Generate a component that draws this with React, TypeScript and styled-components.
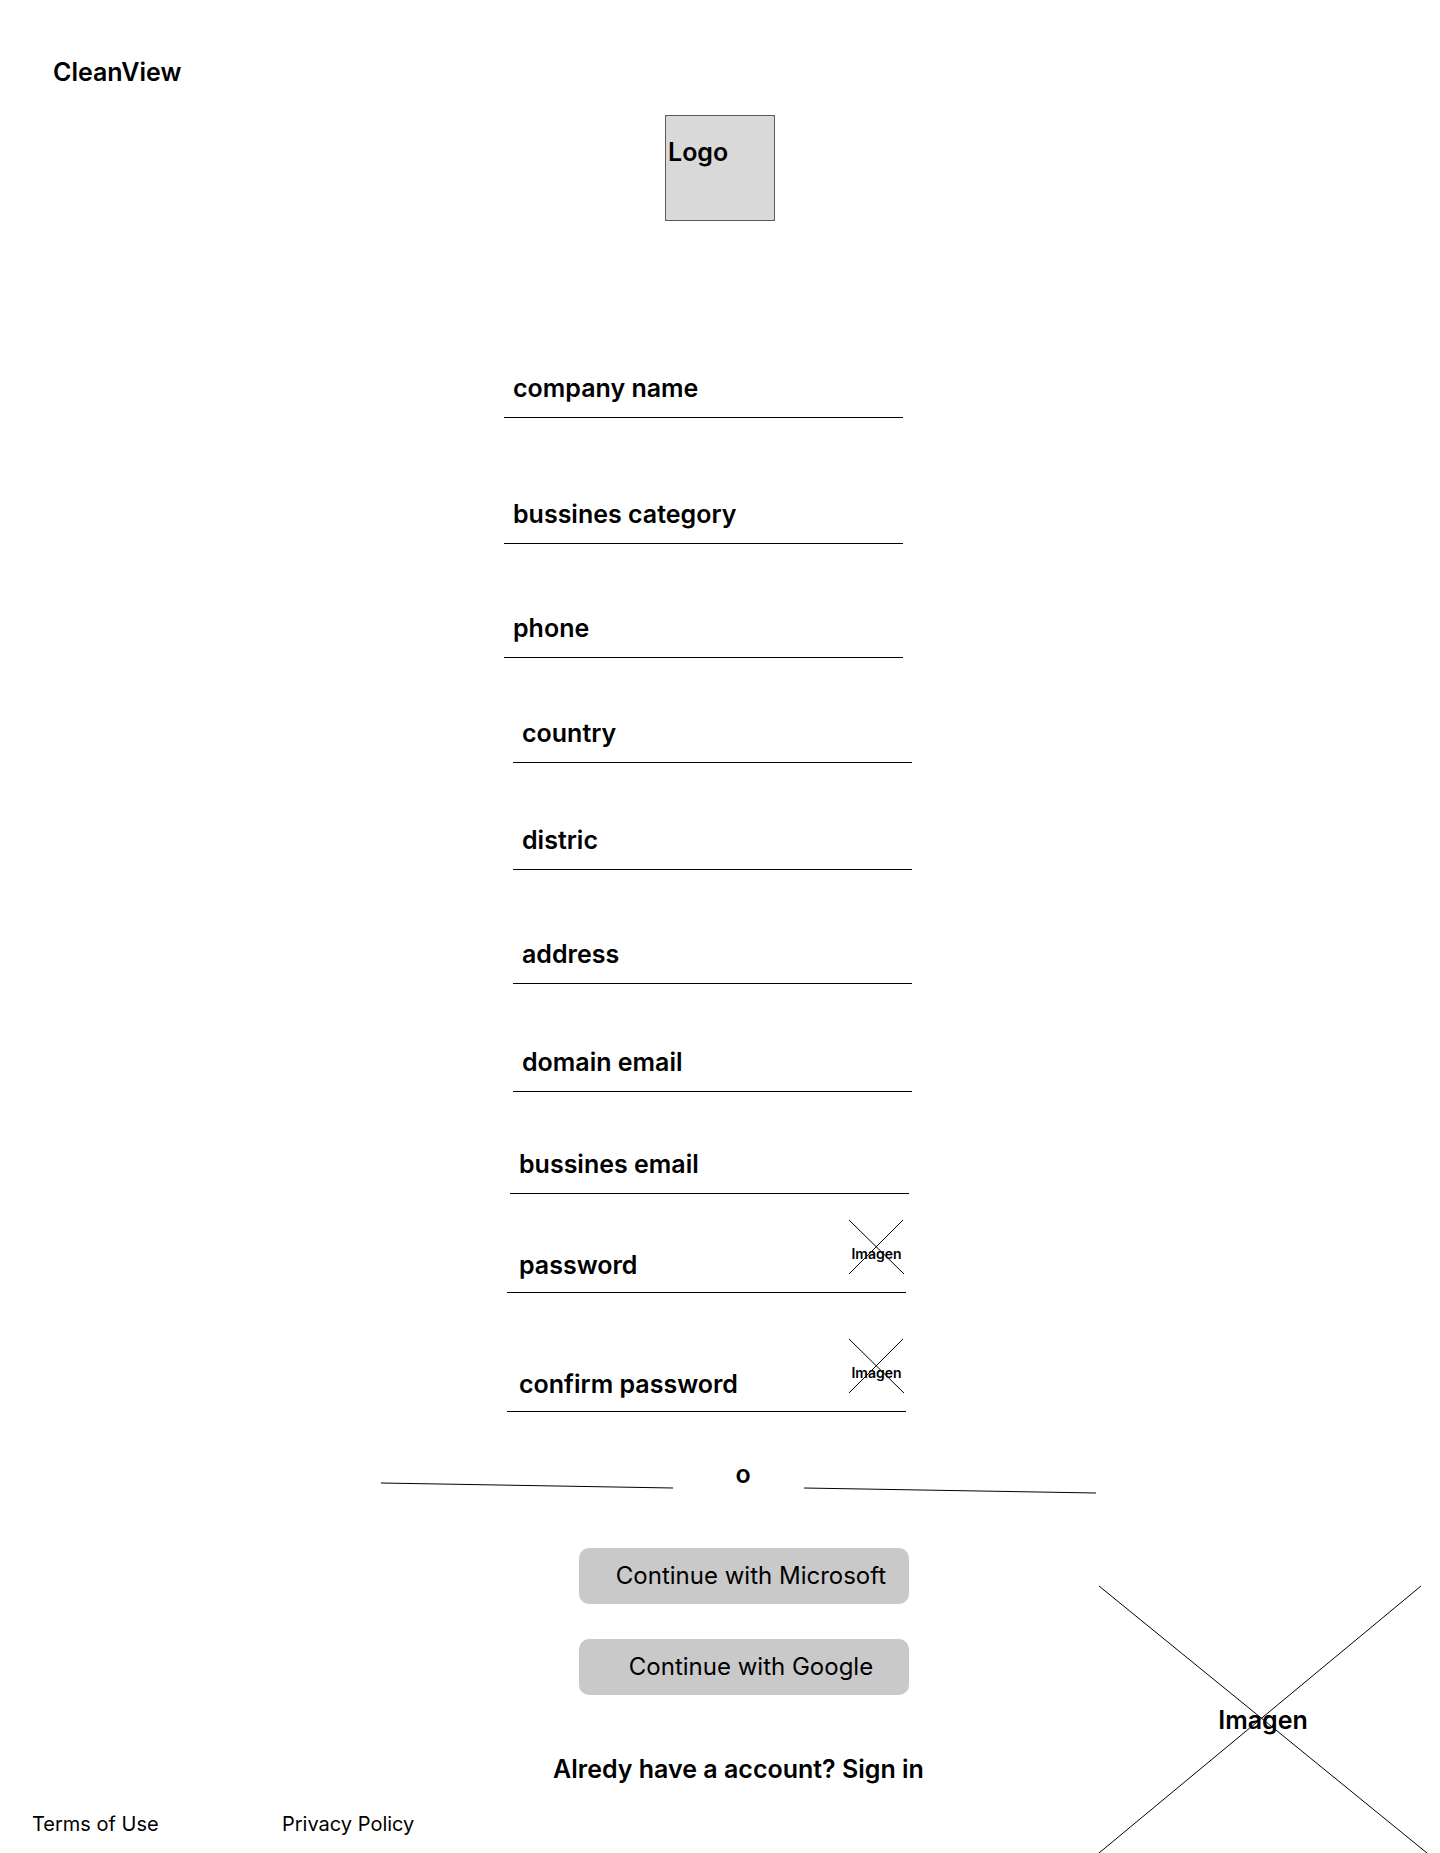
import React from "react";
import styled, { createGlobalStyle } from "styled-components";

const GlobalStyle = createGlobalStyle`
  *, *::before, *::after { box-sizing: border-box; }
  body {
    margin: 0;
    background: #fff;
    color: #000;
    font-family: Inter, "Liberation Sans", sans-serif;
  }
  h1, p, figure { margin: 0; }
`;

const Page = styled.div`
  display: flex;
  flex-direction: column;
`;

const Header = styled.header`
  padding: 54px 53px 0;
`;

const Brand = styled.h1`
  font-size: 25px;
  line-height: 36px;
  font-weight: 600;
`;

const LogoBox = styled.div`
  align-self: center;
  width: 110px;
  height: 106px;
  margin-top: 25px;
  padding: 18px 2px;
  border: 1px solid #5a5a5a;
  background: #d9d9d9;
  font-size: 25px;
  line-height: 36px;
  font-weight: 600;
`;

const Form = styled.form`
  align-self: center;
  width: 100%;
  max-width: 432px;
  margin-top: 149px;
`;

const Group = styled.div<{ $indent: number }>`
  width: 399px;
  max-width: 100%;
  margin-left: ${(p) => p.$indent}px;
`;

const Field = styled.div<{ $space: number; $secret: boolean }>`
  display: flex;
  align-items: flex-end;
  margin-top: ${(p) => p.$space}px;
  padding: 0 2px ${(p) => (p.$secret ? 9 : 11)}px ${(p) => (p.$secret ? 12 : 9)}px;
  border-bottom: 1px solid #000;
`;

const Label = styled.label`
  font-size: 25px;
  line-height: 36px;
  font-weight: 600;
  white-space: nowrap;
`;

const Input = styled.input`
  flex: 1;
  min-width: 0;
  height: 36px;
  padding: 0 8px;
  border: 0;
  outline: 0;
  background: transparent;
  font: inherit;
  font-size: 20px;
`;

const RevealButton = styled.button`
  display: grid;
  place-items: center;
  width: 55px;
  height: 54px;
  margin-bottom: 9px;
  padding: 0;
  border: 0;
  background: transparent;
  color: #000;
  font: inherit;
  cursor: pointer;
`;

const Cross = styled.svg`
  grid-area: 1 / 1;
  width: 100%;
  height: 100%;
  overflow: visible;
`;

const RevealText = styled.span`
  grid-area: 1 / 1;
  padding-top: 14px;
  font-size: 14px;
  line-height: 20px;
  font-weight: 600;
`;

const Bottom = styled.div`
  display: grid;
  grid-template-columns: minmax(0, 1fr) minmax(0, 758px) minmax(0, 1fr);
  grid-template-rows: auto auto;
  margin-top: 44px;
`;

const Actions = styled.section`
  grid-column: 2;
  display: flex;
  flex-direction: column;
  align-items: center;
  padding: 0 3px 0 40px;
`;

const Divider = styled.div`
  display: flex;
  width: 100%;
`;

const Rule = styled.svg`
  flex: 1;
  min-width: 0;
  height: 12px;
  margin-top: 26px;
`;

const Or = styled.span`
  width: 131px;
  padding-left: 9px;
  text-align: center;
  font-size: 25px;
  line-height: 36px;
  font-weight: 600;
`;

const Providers = styled.div`
  display: flex;
  flex-direction: column;
  gap: 35px;
  margin: 54px 0 56px;
  padding-left: 11px;
`;

const ProviderButton = styled.button`
  width: 330px;
  height: 56px;
  padding: 0 0 0 14px;
  border: 0;
  border-radius: 10px;
  background: #c9c9c9;
  color: #000;
  font-family: inherit;
  font-size: 24px;
  line-height: 36px;
  white-space: nowrap;
  cursor: pointer;
`;

const SignIn = styled.p`
  font-size: 25px;
  line-height: 36px;
  font-weight: 600;
  white-space: nowrap;
`;

const Link = styled.a`
  color: inherit;
  text-decoration: none;
`;

const Footer = styled.footer`
  grid-column: 1 / 3;
  grid-row: 2;
  display: grid;
  grid-template-columns: 250px auto;
  justify-content: start;
  padding: 22px 32px 14px;
  font-size: 20px;
  line-height: 30px;
`;

const Picture = styled.figure`
  grid-column: 3;
  grid-row: 1 / 3;
  align-self: end;
  display: grid;
  place-items: center;
  width: 328px;
  height: 267px;
`;

const Caption = styled.figcaption`
  grid-area: 1 / 1;
  font-size: 25px;
  line-height: 36px;
  font-weight: 600;
`;

type FieldSpec = { id: string; label: string; type: string; space: number };

const groups: { indent: number; fields: FieldSpec[] }[] = [
  {
    indent: 0,
    fields: [
      { id: "company", label: "company name", type: "text", space: 0 },
      { id: "category", label: "bussines category", type: "text", space: 78 },
      { id: "phone", label: "phone", type: "tel", space: 66 },
    ],
  },
  {
    indent: 9,
    fields: [
      { id: "country", label: "country", type: "text", space: 57 },
      { id: "distric", label: "distric", type: "text", space: 59 },
      { id: "address", label: "address", type: "text", space: 66 },
      { id: "domain", label: "domain email", type: "email", space: 60 },
    ],
  },
  {
    indent: 6,
    fields: [{ id: "email", label: "bussines email", type: "email", space: 54 }],
  },
  {
    indent: 3,
    fields: [
      { id: "password", label: "password", type: "password", space: 26 },
      { id: "confirm", label: "confirm password", type: "password", space: 46 },
    ],
  },
];

function SlopedRule({ from, to }: { from: number; to: number }) {
  return (
    <Rule viewBox="0 0 292 12" preserveAspectRatio="none" aria-hidden="true">
      <line x1="0" y1={from} x2="292" y2={to} stroke="#000" />
    </Rule>
  );
}

function FormField({ id, label, type, space }: FieldSpec) {
  const [shown, setShown] = React.useState(false);
  const secret = type === "password";
  return (
    <Field $space={space} $secret={secret}>
      <Label htmlFor={id}>{label}</Label>
      <Input id={id} name={id} type={secret && shown ? "text" : type} />
      {secret && (
        <RevealButton type="button" onClick={() => setShown(!shown)}>
          <Cross viewBox="0 0 55 54" aria-hidden="true">
            <path d="M0 0 55 54M54 0 0 54" stroke="#000" fill="none" />
          </Cross>
          <RevealText>Imagen</RevealText>
        </RevealButton>
      )}
    </Field>
  );
}

export default function App() {
  return (
    <Page>
      <GlobalStyle />
      <Header>
        <Brand>CleanView</Brand>
      </Header>
      <LogoBox>Logo</LogoBox>
      <Form>
        {groups.map((group) => (
          <Group key={group.indent} $indent={group.indent}>
            {group.fields.map((field) => (
              <FormField key={field.id} {...field} />
            ))}
          </Group>
        ))}
      </Form>
      <Bottom>
        <Actions>
          <Divider>
            <SlopedRule from={1} to={6} />
            <Or>o</Or>
            <SlopedRule from={6} to={11} />
          </Divider>
          <Providers>
            <ProviderButton type="button">Continue with Microsoft</ProviderButton>
            <ProviderButton type="button">Continue with Google</ProviderButton>
          </Providers>
          <SignIn>
            Alredy have a account? <Link href="#sign-in">Sign in</Link>
          </SignIn>
        </Actions>
        <Footer>
          <Link href="#terms">Terms of Use</Link>
          <Link href="#privacy">Privacy Policy</Link>
        </Footer>
        <Picture>
          <Cross viewBox="0 0 328 267" aria-hidden="true">
            <path d="M0 0 328 267M322 0 0 267" stroke="#000" fill="none" />
          </Cross>
          <Caption>Imagen</Caption>
        </Picture>
      </Bottom>
    </Page>
  );
}
